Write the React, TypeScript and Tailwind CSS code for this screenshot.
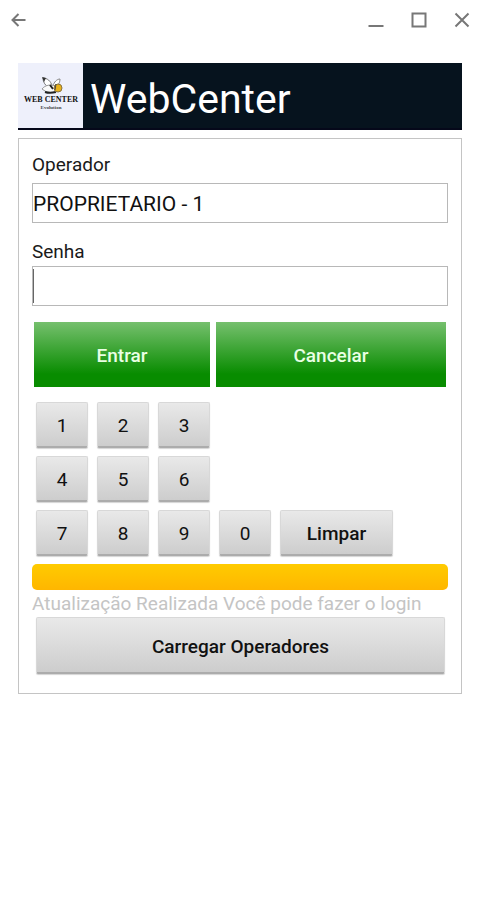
import { useState } from 'react';
import type { ReactNode } from 'react';

const OPERATORS = ['PROPRIETARIO - 1'];

const KEY_ROWS = [
    ['1', '2', '3'],
    ['4', '5', '6'],
    ['7', '8', '9', '0'],
];

interface GreyButtonProps {
    children: ReactNode;
    onClick?: () => void;
    size: string;
}

function GreyButton({ children, onClick, size }: GreyButtonProps) {
    return (
        <button
            type="button"
            onClick={onClick}
            className={`${size} rounded-xs border border-[#d8d8d8] border-b-2 border-b-[#acacac] bg-linear-to-b from-[#e9e9e9] to-[#cdcdcd] pt-1 text-[#111] shadow-[0_1px_1px_#d4d4d4]`}
        >
            {children}
        </button>
    );
}

function Logo() {
    return (
        <svg viewBox="0 0 65 65" className="size-[65px] shrink-0 bg-[#eef0fb]" role="img" aria-label="Web Center">
            {/* wings */}
            <path d="M25 15c4 0 8 3 9 8l-4 1c-3-2-5-5-5-9z" fill="#fff" stroke="#777" strokeWidth="1" />
            <path d="M42 16c-3 0-6 3-7 7l4 0c2-2 3-4 3-7z" fill="#fff" stroke="#888" strokeWidth="1" />
            <path d="M24 14l4 1-2 4z" fill="#333" />
            {/* body */}
            <path d="M24 26c3-4 9-5 13-3l2 5c-4 2-9 2-12 0z" fill="#fafafa" stroke="#999" strokeWidth="1" />
            <path d="M32 22l3 4M27 29c3 1 7 1 11 0" fill="none" stroke="#222" strokeWidth="2" />
            <circle cx="40" cy="25" r="4" fill="#e8b21c" stroke="#8a7440" strokeWidth="1" />
            <path d="M38 21l-1 6" stroke="#444" strokeWidth="1" />
            <text x="33" y="39" textAnchor="middle" fontFamily="Liberation Serif, serif" fontSize="8" fontWeight="bold" fill="#111">
                WEB CENTER
            </text>
            <text x="33" y="46" textAnchor="middle" fontFamily="Liberation Serif, serif" fontSize="5" fontWeight="bold" fill="#444">
                Evolution
            </text>
        </svg>
    );
}

function WindowBar() {
    return (
        <div className="flex h-[39px] items-center justify-between pr-[11px] pl-2 text-[#777]">
            <button type="button" aria-label="Voltar">
                <svg viewBox="0 0 20 20" className="size-5" fill="none" stroke="currentColor" strokeWidth="2">
                    <path d="M17.5 10H4.5M10.5 4L4.5 10L10.5 16" />
                </svg>
            </button>
            <div className="flex gap-[23px]">
                <button type="button" aria-label="Minimizar">
                    <svg viewBox="0 0 20 20" className="size-5" fill="none" stroke="currentColor" strokeWidth="2">
                        <path d="M2.5 16h15" />
                    </svg>
                </button>
                <button type="button" aria-label="Maximizar">
                    <svg viewBox="0 0 20 20" className="size-5" fill="none" stroke="currentColor" strokeWidth="2">
                        <path d="M3.5 3.5h13v13h-13z" />
                    </svg>
                </button>
                <button type="button" aria-label="Fechar">
                    <svg viewBox="0 0 20 20" className="size-5" fill="none" stroke="currentColor" strokeWidth="2">
                        <path d="M3.5 3.5l13 13M16.5 3.5l-13 13" />
                    </svg>
                </button>
            </div>
        </div>
    );
}

export default function App() {
    const [operator, setOperator] = useState(OPERATORS[0]);
    const [password, setPassword] = useState('');

    return (
        <div className="min-h-screen bg-white font-[Roboto,sans-serif] text-[19px] text-[#1a1a1a]">
            <WindowBar />

            <main className="mt-6 pr-[21px] pl-[18px]">
                <header className="flex border-b-2 border-[#05081a] bg-[#06131e]">
                    <Logo />
                    <h1 className="flex items-center pt-2 pl-[7px] text-[41px] leading-none text-white">WebCenter</h1>
                </header>

                <form
                    onSubmit={e => e.preventDefault()}
                    className="mt-2 border border-[#c4c4c4] px-[13px] pt-3 pb-[19px]"
                >
                    <label htmlFor="operator" className="block h-8 leading-7">Operador</label>
                    <select
                        id="operator"
                        value={operator}
                        onChange={e => setOperator(e.target.value)}
                        className="block h-10 w-full appearance-none border border-[#b8b8b8] bg-white pt-1 text-[21px] text-[#111] outline-none"
                    >
                        {OPERATORS.map(name => (
                            <option key={name}>{name}</option>
                        ))}
                    </select>

                    <label htmlFor="password" className="mt-[15px] block h-7 leading-7">Senha</label>
                    <div className="flex h-10 items-center border border-[#b8b8b8]">
                        <span className="h-[34px] w-px bg-[#666]" />
                        <input
                            id="password"
                            type="password"
                            value={password}
                            onChange={e => setPassword(e.target.value)}
                            className="h-full min-w-0 flex-1 text-[21px] outline-none"
                        />
                    </div>

                    <div className="mt-4 flex gap-[6px] px-[2px] font-medium text-[#e9ffe4]">
                        <button
                            type="submit"
                            className="h-[65px] w-[176px] bg-linear-to-b/srgb from-[#76c06e] to-[#088c00] to-80% pt-1"
                        >
                            Entrar
                        </button>
                        <button
                            type="button"
                            onClick={() => setPassword('')}
                            className="h-[65px] flex-1 bg-linear-to-b/srgb from-[#76c06e] to-[#088c00] to-80% pt-1"
                        >
                            Cancelar
                        </button>
                    </div>

                    <div className="mt-[15px] flex flex-col gap-2 px-1">
                        {KEY_ROWS.map(row => (
                            <div key={row[0]} className="flex gap-[9px]">
                                {row.map(digit => (
                                    <GreyButton key={digit} size="h-[46px] w-[52px]" onClick={() => setPassword(password + digit)}>
                                        {digit}
                                    </GreyButton>
                                ))}
                                {row.includes('0') && (
                                    <GreyButton size="h-[46px] w-[113px] font-medium" onClick={() => setPassword('')}>
                                        Limpar
                                    </GreyButton>
                                )}
                            </div>
                        ))}
                    </div>

                    <div
                        role="progressbar"
                        aria-label="Atualização"
                        aria-valuenow={100}
                        className="mt-2 h-[26px] rounded-[5px] bg-linear-to-b from-[#ffcb00] to-[#ffb600]"
                    />
                    <p className="h-[27px] leading-7 text-[#c4c4c4]">Atualização Realizada Você pode fazer o login</p>
                    <div className="pr-[3px] pl-1">
                        <GreyButton size="h-[57px] w-full font-medium">Carregar Operadores</GreyButton>
                    </div>
                </form>
            </main>
        </div>
    );
}
